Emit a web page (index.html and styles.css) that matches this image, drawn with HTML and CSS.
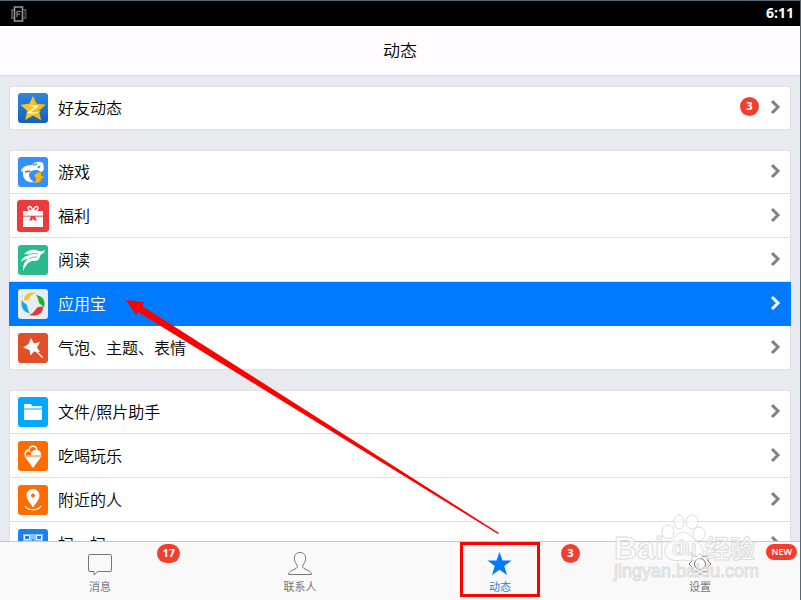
FILE: index.html
```html
<!DOCTYPE html>
<html lang="zh-CN">
<head>
    <meta charset="UTF-8">
    <meta name="viewport" content="width=device-width, initial-scale=1.0">
    <title>动态</title>
    <link rel="stylesheet" href="styles.css">
</head>
<body>
    <!-- Status bar -->
    <div class="status-bar">
        <svg class="status-icon" width="16" height="16" viewBox="0 0 16 16" fill="none">
            <path d="M3 4H1v8h2M12.500 4h2v8h-2" stroke="#4c4c4c" stroke-width="2"/>
            <path d="M3.500 1h8v14h-8z" stroke="#999" stroke-width="1.600"/>
            <path d="M6 11V5.500h4M6 8.200h3" stroke="#888" stroke-width="1.200"/>
        </svg>
        <span class="clock">6:11</span>
    </div>

    <header class="title-bar">
        <h1>动态</h1>
    </header>

    <main class="content">
        <div class="group">
            <a class="row" href="#">
                <svg class="icon" viewBox="0 0 32 32">
                    <defs>
                        <linearGradient id="zone" x1="0" y1="0" x2="0" y2="1">
                            <stop offset="0" stop-color="#2f86dc"/>
                            <stop offset="1" stop-color="#1263b8"/>
                        </linearGradient>
                    </defs>
                    <rect x="1" y="1" width="30" height="30" rx="3" fill="url(#zone)"/>
                    <path d="M16 4l3.600 7.800 8.900 1-6.600 6 2 9.200L16 23.500 8.200 28l2-9.200-6.700-6 8.900-1z" fill="#fdc41f"/>
                    <path d="M16 4l3.600 7.800 8.900 1-6.600 6 2 9.200L16 23.500z" fill="#fbb40c" opacity=".5"/>
                    <path d="M11 14c4-1 8-1 11 0l-8 6c3 .7 6 .4 10-1-4 3-9 3.500-14 2l7.500-6c-2-.6-4-.7-6.500-1z" fill="#fff6c8"/>
                </svg>
                <span class="label">好友动态</span>
                <span class="badge">3</span>
                <svg class="chevron" viewBox="0 0 11 16"><path d="M2 2l6 6-6 6"/></svg>
            </a>
        </div>

        <div class="group">
            <a class="row" href="#">
                <svg class="icon" viewBox="0 0 32 32">
                    <rect x="1" y="1" width="30" height="30" rx="3" fill="#3590fa"/>
                    <path d="M4 15c1-4 6-6 11-6 3-4 8-4 11-2l1 6-2 3-5-2c-4 0-8 1-8 5 0 3 2 5 5 7-3 1-8 0-10-4-1-2-1-4-1-6z" fill="#fff"/>
                    <path d="M16 9l4-1" stroke="#37b96c" stroke-width="1.300"/>
                    <path d="M8 16l5-1" stroke="#f0343c" stroke-width="1.400"/>
                    <path d="M21 12l2-2" stroke="#2674d8" stroke-width="1.500"/>
                    <path d="M17 20c2-3 4-4 7-4v4l4 1-4 2c0 3-2 4-7 4 3-3 3-5 0-7z" fill="#fdb506"/>
                </svg>
                <span class="label">游戏</span>
                <svg class="chevron" viewBox="0 0 11 16"><path d="M2 2l6 6-6 6"/></svg>
            </a>
            <a class="row" href="#">
                <svg class="icon" viewBox="0 0 32 32">
                    <rect width="32" height="32" rx="3" fill="#f0393b"/>
                    <path d="M16 11c-3 0-5-1-5-3s3-3 5 3c2-6 5-5 5-3s-2 3-5 3z" fill="none" stroke="#fff" stroke-width="1.300"/>
                    <path d="M6 11h20v5H6zM6 17h20v10H6z" fill="#fff"/>
                    <path d="M6 15.500h20v1.500H6z" fill="#f68a8b"/>
                    <path d="M14 16h4l2 5-2-1-1 1-1-3-1 3-1-1-2 1z" fill="#f0393b"/>
                </svg>
                <span class="label">福利</span>
                <svg class="chevron" viewBox="0 0 11 16"><path d="M2 2l6 6-6 6"/></svg>
            </a>
            <a class="row" href="#">
                <svg class="icon" viewBox="0 0 32 32">
                    <rect x="1" y="1" width="30" height="30" rx="3" fill="#2bb98e"/>
                    <path d="M6 27c0-6 1-9 5-12-3 0-5 1-7 3 1-4 4-6 8-7-2-1-3-1-5-1 4-4 8-5 12-4 3 1 5 2 9 0-1 3-2 4-4 4l-2 5c-1 2-4 2-7 2-4 1-6 4-9 10z" fill="#fff"/>
                    <path d="M9 12c4-2 7-3 12-2M12 15c3-2 5-2 8-2" fill="none" stroke="#2bb98e" stroke-width=".8"/>
                </svg>
                <span class="label">阅读</span>
                <svg class="chevron" viewBox="0 0 11 16"><path d="M2 2l6 6-6 6"/></svg>
            </a>
            <a class="row selected" href="#">
                <svg class="icon" viewBox="0 0 32 32">
                    <rect x="1" y="1" width="30" height="30" rx="3" fill="#e9edf2"/>
                    <path d="M7 12C7 6 13 3 20 5c-4 1-6 2-8 5-2 3-4 3-5 2z" fill="#ecc81c"/>
                    <path d="M19 7c7 1 10 6 8 13-1-2-2-3-4-4-2-2-1-5-4-9z" fill="#17b32b"/>
                    <path d="M26 19c0 7-6 10-14 8 3-1 5-3 7-6 2-3 5-3 7-2z" fill="#dd3b35"/>
                    <path d="M5 12c1 2 2 3 4 4 2 2 1 6 4 9-6 0-10-6-8-13z" fill="#1da5e2"/>
                </svg>
                <span class="label">应用宝</span>
                <svg class="chevron" viewBox="0 0 11 16"><path d="M2 2l6 6-6 6"/></svg>
            </a>
            <a class="row" href="#">
                <svg class="icon" viewBox="0 0 32 32">
                    <rect x="1" y="1" width="30" height="30" rx="3" fill="#e04f26"/>
                    <path d="M14 6l3 5.500 6-1.500-3 5.500 3 4.500-6-.5-3.500 4-1-5.500-6.500-2.500 5.500-3.500z" fill="#fff"/>
                    <path d="M18 18l7.500 7.500" stroke="#fff" stroke-width="1.300"/>
                </svg>
                <span class="label">气泡、主题、表情</span>
                <svg class="chevron" viewBox="0 0 11 16"><path d="M2 2l6 6-6 6"/></svg>
            </a>
        </div>

        <div class="group">
            <a class="row" href="#">
                <svg class="icon" viewBox="0 0 32 32">
                    <rect x="1" y="1" width="30" height="30" rx="3" fill="#00a8ff"/>
                    <path d="M7 8h7l1 2h10v3H7z" fill="#fff"/>
                    <path d="M7 12h18v2H7z" fill="#7fd3ff"/>
                    <path d="M7 14h18v10H7z" fill="#fff"/>
                </svg>
                <span class="label">文件/照片助手</span>
                <svg class="chevron" viewBox="0 0 11 16"><path d="M2 2l6 6-6 6"/></svg>
            </a>
            <a class="row" href="#">
                <svg class="icon" viewBox="0 0 32 32">
                    <rect x="1" y="1" width="30" height="30" rx="3" fill="#ff6c00"/>
                    <path d="M8 15c0-3 1-5 4-5 1-5 7-5 8 0" fill="none" stroke="#fff" stroke-width="1.300"/>
                    <path d="M14 15c0-3 2-5 5-5s5 1 5 5z" fill="#fff"/>
                    <path d="M8 15c0-3 2-4 4-4 2 0 3 2 3 4" fill="none" stroke="#fff"/>
                    <path d="M7.500 15h17v2h-17z" fill="#ffb98a"/>
                    <path d="M8 17h16l-8 11z" fill="#fff"/>
                </svg>
                <span class="label">吃喝玩乐</span>
                <svg class="chevron" viewBox="0 0 11 16"><path d="M2 2l6 6-6 6"/></svg>
            </a>
            <a class="row" href="#">
                <svg class="icon" viewBox="0 0 32 32">
                    <rect x="1" y="1" width="30" height="30" rx="3" fill="#ff6c00"/>
                    <path d="M16 5c4 0 6.500 3 6.500 6.500 0 4-4 8-6.500 12-2.500-4-6.500-8-6.500-12C9.500 8 12 5 16 5zm0 4.500a2 2 0 1 0 0 4 2 2 0 0 0 0-4z" fill="#fff" fill-rule="evenodd"/>
                    <path d="M8 22c3 5 13 5 16 0" fill="none" stroke="#fff" stroke-width="1.300"/>
                </svg>
                <span class="label">附近的人</span>
                <svg class="chevron" viewBox="0 0 11 16"><path d="M2 2l6 6-6 6"/></svg>
            </a>
            <a class="row" href="#">
                <svg class="icon" viewBox="0 0 32 32">
                    <rect x="1" y="1" width="30" height="30" rx="3" fill="#1c80ee"/>
                    <path d="M6 6h20v20H6z" fill="#8cc0f8"/>
                    <path d="M7.500 7.500h5v4h-5zM19.500 7.500h5v4h-5zM7.500 20.500h5v4h-5z" fill="#1c80ee" stroke="#fff"/>
                    <path d="M16 11v12M9 15h5M18 15h6" stroke="#1c80ee" stroke-width="1.500"/>
                </svg>
                <span class="label">扫一扫</span>
                <svg class="chevron" viewBox="0 0 11 16"><path d="M2 2l6 6-6 6"/></svg>
            </a>
        </div>
    </main>

    <!-- Bottom tabs -->
    <nav class="tab-bar">
        <a class="tab" href="#">
            <svg class="tab-icon" viewBox="0 0 26 26">
                <path d="M3 3.500h20q1.500 0 1.500 1.500v14q0 1.500-1.500 1.500H11l-4 3.500v-3.500H3q-1.500 0-1.500-1.500V5q0-1.500 1.500-1.500z"/>
            </svg>
            <span>消息</span>
            <span class="badge">17</span>
        </a>
        <a class="tab" href="#">
            <svg class="tab-icon" viewBox="0 0 26 26">
                <path d="M13 1.500c4 0 6 3 5.500 7-.3 3-1.500 4-2.500 5.500-1 2 0 3 2 4 3 1.500 6 2 6.500 5.500h-23c.5-3.500 3.500-4 6.500-5.500 2-1 3-2 2-4-1-1.500-2.200-2.500-2.500-5.500-.5-4 1.500-7 5.500-7z"/>
            </svg>
            <span>联系人</span>
        </a>
        <a class="tab active" href="#">
            <svg class="tab-icon" viewBox="0 0 26 26">
                <path d="M12.500 1l3 8.500h9l-7.200 5.500 2.700 9-7.500-5.300L5 24l2.700-9L.5 9.500h9z"/>
            </svg>
            <span>动态</span>
            <span class="badge">3</span>
        </a>
        <a class="tab" href="#">
            <svg class="tab-icon" viewBox="0 0 26 26">
                <path d="M13 2.500l3 3 5-.5v5l3 3-3 3v5l-5-.5-3 3.500-3-3.500-5 .5v-5l-3-3 3-3V5l5 .5z"/>
                <circle cx="13" cy="13" r="5.500"/>
            </svg>
            <span>设置</span>
            <span class="badge new">NEW</span>
        </a>
    </nav>

    <!-- Site watermark -->
    <svg class="watermark" width="160" height="75" viewBox="0 0 160 75">
        <ellipse cx="57" cy="21" rx="6" ry="7"/>
        <ellipse cx="68" cy="11" rx="5" ry="7"/>
        <ellipse cx="81" cy="11" rx="6" ry="7"/>
        <ellipse cx="88" cy="23" rx="6" ry="7"/>
        <path d="M54 40c0-8 7-9 11-15 3-5 11-5 15 0 4 6 12 8 12 16 0 8-8 10-19 8-12 2-19-1-19-9z"/>
        <text x="3" y="48" class="mark-big">Bai</text>
        <text x="61" y="44" class="mark-du">du</text>
        <text x="94" y="47" class="mark-cjk">经验</text>
        <text x="3" y="66" class="mark-url">jingyan.baidu.com</text>
    </svg>

    <!-- Arrow from the tab to the highlighted row -->
    <svg class="arrow" width="374" height="236" viewBox="0 0 374 236">
        <path d="M0 0l18 2-2 4 357 227-1 1L12 12l-2 3z"/>
    </svg>
    <div class="marker"></div>
</body>
</html>
```

FILE: styles.css
```css
* {
    margin: 0;
    padding: 0;
    box-sizing: border-box;
}

body {
    position: relative;
    display: flex;
    flex-direction: column;
    height: 100vh;
    overflow: hidden;
    border-top: 1px solid #566973;
    border-right: 1px solid #566973;
    background-color: #e7eaef;
    color: #000;
    font-family: "Open Sans", "Noto Sans CJK SC", sans-serif;
    font-size: 16px;
}

a {
    color: inherit;
    text-decoration: none;
}

/* Top bars */
.status-bar {
    display: flex;
    flex: none;
    align-items: center;
    justify-content: space-between;
    height: 25px;
    padding: 0 6px 0 11px;
    background: #000;
    color: #fff;
}

.clock {
    font-size: 14px;
    font-weight: bold;
    line-height: 20px;
    padding-bottom: 2px;
}

.title-bar {
    flex: none;
    height: 50px;
    border-bottom: 1px solid #d5d6da;
    background: #fffbff;
    text-align: center;
}

.title-bar h1 {
    font-family: "Noto Sans CJK SC", sans-serif;
    font-size: 17px;
    font-weight: 350;
    line-height: 48px;
}

/* List */
.content {
    flex: 1;
    min-height: 0;
    overflow: hidden;
    padding: 10px 9px;
}

.group {
    margin-bottom: 20px;
}

.row {
    display: flex;
    align-items: center;
    height: 44px;
    padding: 0 9px 0 7px;
    border: 1px solid #e0e0e2;
    border-top: none;
    background: #fff;
}

.row:first-child {
    border-top: 1px solid #e0e0e2;
}

.row.selected {
    border-color: #007aff;
    background: #007aff;
    color: #fff;
}

.icon {
    width: 32px;
    height: 32px;
    margin-right: 9px;
}

.label {
    flex: 1;
    padding-bottom: 2px;
    font-family: "Noto Sans CJK SC", sans-serif;
    font-weight: 350;
    line-height: 24px;
}

.chevron {
    width: 11px;
    height: 16px;
    margin-bottom: 2px;
    margin-left: 11px;
    fill: none;
    stroke: #7f8287;
    stroke-width: 3;
}

.selected .chevron {
    stroke: #fff;
}

.badge {
    min-width: 19px;
    height: 19px;
    padding: 0 5px;
    border-radius: 10px;
    background: #f03e2f;
    color: #fff;
    font-size: 11px;
    font-weight: bold;
    line-height: 17px;
    text-align: center;
}

.row .badge {
    margin-bottom: 4px;
}

/* Tabs */
.tab-bar {
    display: flex;
    flex: none;
    height: 59px;
    border-top: 1px solid #c8c8c8;
    background: #f9f9f9;
}

.tab {
    position: relative;
    display: flex;
    flex: 1;
    flex-direction: column;
    align-items: center;
    padding-top: 9px;
    color: #777;
    font-size: 11px;
    line-height: 20px;
}

.tab-icon {
    width: 26px;
    height: 26px;
    fill: none;
    stroke: #777;
}

.tab.active {
    color: #2a7fd4;
}

.tab.active .tab-icon {
    fill: #007aff;
    stroke: none;
}

.tab .badge {
    position: absolute;
    top: 2px;
    right: 20px;
}

.tab .badge.new {
    right: 3px;
    height: 16px;
    font-size: 9px;
    font-weight: 600;
    line-height: 16px;
}

/* Overlays */
.watermark {
    position: absolute;
    top: 510px;
    left: 611px;
    fill: rgba(255, 255, 255, 0.6);
    stroke: #dcdcdc;
    font-family: "Liberation Sans", "Noto Sans CJK SC", sans-serif;
}

.mark-big {
    font-size: 32px;
    font-weight: bold;
}

.mark-du {
    font-size: 20px;
    font-weight: bold;
}

.mark-cjk {
    font-size: 25px;
    font-weight: bold;
}

.mark-url {
    font-size: 18px;
}

.arrow {
    position: absolute;
    top: 299px;
    left: 126px;
    fill: #f00;
}

.marker {
    position: absolute;
    top: 541px;
    left: 460px;
    width: 80px;
    height: 55px;
    border: 3px solid #f00;
}
```
